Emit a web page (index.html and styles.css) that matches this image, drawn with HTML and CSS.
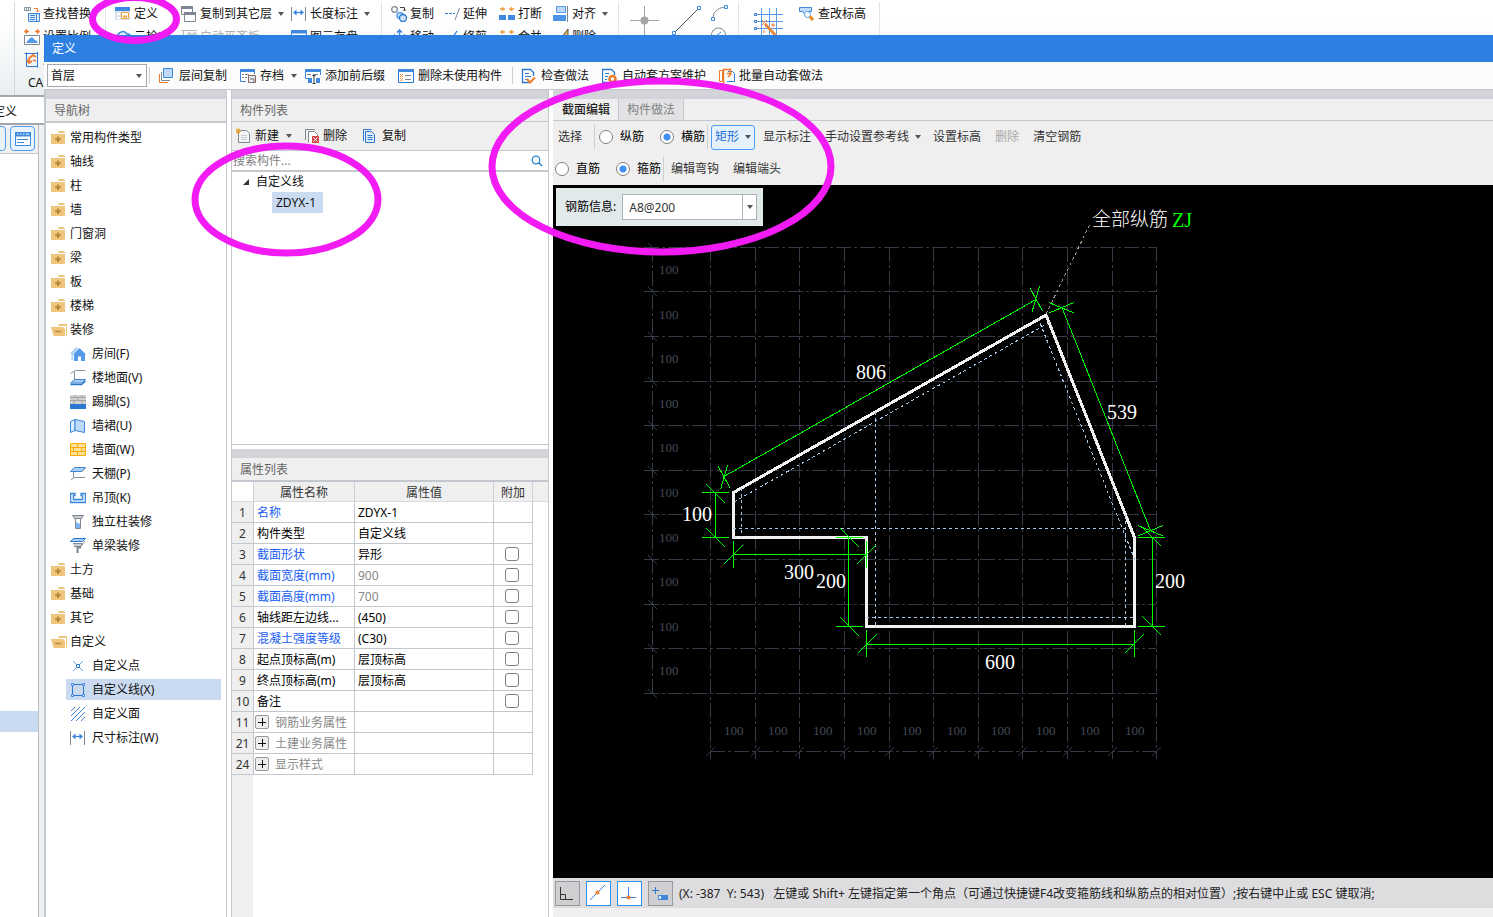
FILE: index.html
```html
<!DOCTYPE html>
<html lang="zh-CN">
<head>
<meta charset="utf-8">
<title>定义</title>
<link rel="stylesheet" href="styles.css">
</head>
<body>
<svg class="sprite" aria-hidden="true">
  <symbol id="i-folder" viewBox="0 0 16 16"><path d="M7 3V2.500L8 1h5l1 1.500V3z" fill="#efc984"/><path d="M0 4h14v10H0z" fill="#efc67d"/><path d="M7 6.500v5.500M4.200 9.200h5.600" stroke="#b98a33" stroke-width="2"/></symbol>
  <symbol id="i-open" viewBox="0 0 16 16"><path d="M7 4V3l1-1h8v12h-1V4z" fill="#efc67d"/><path d="M0 5h12l2 2v7H2.500z" fill="#efc67d"/><path d="M4 9.500h6" stroke="#b98a33" stroke-width="1.500"/></symbol>
  <symbol id="i-house" viewBox="0 0 16 16"><path d="M0 7.500L6.500 1 8 2.500 3 8v6H1.500V8z" fill="#a9cdf5"/><path d="M9.500 2L16 8.500h-1V15h-4v-4.500H8V15H4V8.500H3z" fill="#559bea"/></symbol>
  <symbol id="i-floor" viewBox="0 0 16 16"><path d="M15.500.5H5.500L.5 3.500" fill="none" stroke="#8795a3"/><path d="M4.500 1v9" stroke="#8795a3"/><path d="M5 9.500h10.500l-4 3.500H.5z" fill="#a9cdf5" stroke="#3d86d8"/><path d="M.5 14.500h11L15.500 11" stroke="#2b76cf" fill="none" stroke-width="1.500"/></symbol>
  <symbol id="i-skirt" viewBox="0 0 16 16"><path d="M0 1h16v9H0z" fill="#d2d2d2"/><path d="M0 3.500h16M0 6.500h16M5 1v2.500M12 1v2.500M8 3.500v3M4 6.500V10M12 6.500V10" stroke="#a4a4a4"/><path d="M0 10h16v5H0z" fill="#2a76d3"/></symbol>
  <symbol id="i-dado" viewBox="0 0 16 16"><path d="M.5 3.500L5 1.500v11L.5 14.500z" fill="#dcecfc" stroke="#3d86d8"/><path d="M5 1.500l9.500 2v11l-9.500-2z" fill="#bedafa" stroke="#3d86d8"/></symbol>
  <symbol id="i-brick" viewBox="0 0 16 16"><path d="M.5 1.500h15v12H.5zM.5 5.500h15M.5 9.500h15M7.500 1.500v4M3.500 5.500v4M11.500 5.500v4M7.500 9.500v4" fill="#ffe29a" stroke="#fdaa00"/></symbol>
  <symbol id="i-ceil" viewBox="0 0 16 16"><path d="M4.500 1.500h11l-4 4H.5z" fill="#a9cdf5" stroke="#3d86d8"/><path d="M3.500 6v6M1 14l3-2.500h11M11.500 6l4-4" fill="none" stroke="#8795a3"/></symbol>
  <symbol id="i-hang" viewBox="0 0 16 16"><path d="M.5 3.500H5v2H3.500v4h9v-4H11v-2h4.500v9H.5z" fill="#dcecfc" stroke="#3d86d8" stroke-width="1.300"/></symbol>
  <symbol id="i-col" viewBox="0 0 16 16"><path d="M2.500 1.500h11l-2 3h-7z" fill="#c9ced3" stroke="#7d8893"/><path d="M5.500 5v9.500h5V5" fill="#fff" stroke="#7d8893"/><path d="M6 8l4 2v4H6z" fill="#7db3f1"/></symbol>
  <symbol id="i-beam" viewBox="0 0 16 16"><path d="M3.500.5h12l-3 3H.5z" fill="#a9cdf5" stroke="#2b76cf"/><path d="M3 5.500h9l-1 3H4M12 7l3-4" fill="#c9ced3" stroke="#7d8893"/><path d="M11 9.500H7.500V15" fill="none" stroke="#7d8893" stroke-width="2"/></symbol>
  <symbol id="i-point" viewBox="0 0 16 16"><path d="M3 3l10 10M13 3L3 13" stroke="#6fa6e6"/><path d="M6.500 6.500h3v3h-3z" fill="#fff" stroke="#2b76cf"/></symbol>
  <symbol id="i-line" viewBox="0 0 16 16"><path d="M2.500 2.500h11v11h-11z" fill="none" stroke="#2b76cf"/><path d="M1.500 1.500h2v2h-2zM12.500 1.500h2v2h-2zM1.500 12.500h2v2h-2zM12.500 12.500h2v2h-2z" fill="#fff" stroke="#3f8ae0"/></symbol>
  <symbol id="i-hatch" viewBox="0 0 16 16"><path d="M1 5l4-4M1 10l9-9M1 15L15 1M6 15l9-9M11 15l4-4" stroke="#3f86dc"/></symbol>
  <symbol id="i-dim" viewBox="0 0 16 16"><path d="M.5 1v14M14.500 1v14" stroke="#7d8893"/><path d="M3 6.500h9" stroke="#3f86dc" stroke-width="1.300"/><path d="M2 6.500L5.500 3.500v6zM13 6.500L9.500 3.500v6z" fill="#3f86dc"/></symbol>
  <symbol id="i-find" viewBox="0 0 16 16"><path d="M.5 1.500h6v3h-6zM2.500 1.500v3M4.500 1.500v3" fill="none" stroke="#8795a3"/><path d="M10 2.500h3.500V6M12 4.500L13.500 6 15 4.500" fill="none" stroke="#ee7a2c"/><path d="M4.500 7.500h11v8h-11z" fill="#dcecfc" stroke="#3d86d8"/><path d="M4.500 7.500h11M6 9.500h5M6 11.500h5M6 13.500h5M12.500 8v7" stroke="#3d86d8"/></symbol>
  <symbol id="i-scale" viewBox="0 0 16 16"><path d="M1 2.500h4M3 .5L1 2.500l2 2M11 2.500h4M13 .5l2 2-2 2" fill="none" stroke="#ee7a2c" stroke-width="1.500"/><path d="M.5 6.500h15v9H.5z" fill="#fff" stroke="#7d8893"/><path d="M2 14l3-4 3-2 3 3 2 1 1 2z" fill="#559bea"/></symbol>
  <symbol id="i-restore" viewBox="0 0 16 16"><path d="M.5 1.500h13v13H2.500V.5M13.500 0v15.500" fill="none" stroke="#2b76cf"/><path d="M5 11V6.500L9 3l3 2M3 8l2 3 3-2M9 8l3 1" fill="none" stroke="#ee7a2c" stroke-width="1.800"/></symbol>
  <symbol id="i-define" viewBox="0 0 16 16"><path d="M0 1h15v13H0z" fill="#dbe4ee"/><path d="M0 1h15v4H0z" fill="#3f8ae0"/><path d="M2 7h3v2H2zM2 11h3v2H2z" fill="#fff"/><path d="M6.500 6.500h7v6h-7z" fill="#fff" stroke="#f2a13d"/><path d="M8 9.500h4v2H8z" fill="#f2a13d"/></symbol>
  <symbol id="i-cloud" viewBox="0 0 16 16"><path d="M3 12a3 3 0 010-6 5 5 0 019-1 4 4 0 011 8z" fill="#dcecfc" stroke="#3d86d8" stroke-width="1.500"/></symbol>
  <symbol id="i-copylayer" viewBox="0 0 16 16"><path d="M.5.500h11v8H.5z" fill="#fff" stroke="#7d8893"/><path d="M0 0h12v3H0z" fill="#7d8893"/><path d="M3.500 6.500h11v9h-11z" fill="#fff" stroke="#7d8893"/><path d="M3 6h12v3H3z" fill="#7d8893"/></symbol>
  <symbol id="i-align" viewBox="0 0 16 16"><path d="M3.500.5h9v6h-9z" fill="#bcd8f8" stroke="#559bea"/><path d="M0 9h13v6H0z" fill="#4d94e6"/><path d="M14.500 0v16" stroke="#7d8893"/></symbol>
  <symbol id="i-flat" viewBox="0 0 16 16"><path d="M0 1.500h16M2.500 2v13M7 4h3v11H7zM12 4h3v11h-3z" fill="#d8d8d8" stroke="#b9b9b9"/></symbol>
  <symbol id="i-window" viewBox="0 0 16 16"><path d="M.5 1.500h15v13H.5z" fill="#fff" stroke="#3d86d8"/><path d="M0 1h16v3.500H0z" fill="#3f8ae0"/><path d="M2 7.500h6M2 10.500h6" stroke="#3d86d8"/></symbol>
  <symbol id="i-copy" viewBox="0 0 16 16"><circle cx="3.500" cy="3.500" r="2.800" fill="#fff" stroke="#7d8893" stroke-width="1.300"/><path d="M9 1.500h4.500V5M12 3.500L13.500 5 15 3.500" fill="none" stroke="#444"/><circle cx="9" cy="9.500" r="3" fill="#cfe3fa" stroke="#559bea" stroke-width="1.500"/><circle cx="12" cy="12" r="3.500" fill="#cfe3fa" stroke="#2b76cf" stroke-width="1.300"/></symbol>
  <symbol id="i-move" viewBox="0 0 16 16"><path d="M8.500 1v14M1.500 8h14M6 3.500L8.500 1 11 3.500M4 5.500L1.500 8 4 10.500M13 5.500L15.500 8 13 10.500" fill="none" stroke="#3d86d8" stroke-width="1.500"/></symbol>
  <symbol id="i-extend" viewBox="0 0 16 16"><path d="M1 7.500h3M5 7.500h3M9 7.500h2" stroke="#2b76cf"/><path d="M15.500 2L11 14" stroke="#7d8893"/></symbol>
  <symbol id="i-trim" viewBox="0 0 16 16"><path d="M13 2L5 14M1 14h3" stroke="#2b76cf" stroke-width="1.300"/></symbol>
  <symbol id="i-break" viewBox="0 0 16 16"><path d="M1 3h5M3.500 1v4M10 3h5M12.500 1v4" stroke="#ee9a3c" stroke-width="1.300"/><path d="M0 9h7v5H0zM9 9h7v5H9z" fill="#3f8ae0"/></symbol>
  <symbol id="i-brush" viewBox="0 0 16 16"><path d="M15 0v6l-6 8-4-1z" fill="#d9b167" stroke="#5d5033"/></symbol>
  <symbol id="i-level" viewBox="0 0 16 16"><path d="M.5 1.500h12v4h-3l-2 5-4-5h-3z" fill="#bedafa" stroke="#3d86d8"/><circle cx="8.500" cy="8.500" r="3" fill="#fff" stroke="#559bea"/><path d="M11 10.500l3 3.500" stroke="#ee8a1c" stroke-width="3"/></symbol>
  <symbol id="i-layers" viewBox="0 0 16 16"><path d="M.5 6v8.500H9" fill="none" stroke="#ee7a2c"/><path d="M2.500 4v8.500H11" fill="none" stroke="#7d8893"/><path d="M4.500.5h9v9h-9z" fill="#bedafa" stroke="#3d86d8"/></symbol>
  <symbol id="i-save" viewBox="0 0 16 16"><path d="M14.500 6V1.500H.5v12H6" fill="#fff" stroke="#3d86d8"/><path d="M0 1h15v3H0z" fill="#3f8ae0"/><path d="M2 6.500h2M5 6.500h4M2 9.500h2M5 9.500h2" stroke="#7d8893"/><path d="M8.500 7.500h7v7h-7zM10 11h4v4" fill="#dcecfc" stroke="#8a6a5a"/></symbol>
  <symbol id="i-prefix" viewBox="0 0 16 16"><path d="M15.500 7V1.500H.5v9H4" fill="#fff" stroke="#3d86d8"/><path d="M0 1h16v3H0z" fill="#3f8ae0"/><path d="M2 6.500h4M8 6.500h5" stroke="#7d8893"/><path d="M3 10h4v5H3zM11 10h4v5h-4z" fill="#3f8ae0"/><path d="M9 7v9M7.500 7.500h3M7.500 15.500h3" stroke="#333"/></symbol>
  <symbol id="i-unused" viewBox="0 0 16 16"><path d="M.5 1.500h15v13H.5z" fill="#fff" stroke="#2b76cf"/><path d="M0 1h16v3H0z" fill="#3f8ae0"/><path d="M2 6l3 3M5 6L2 9M2 10l3 3M5 10l-3 3" stroke="#ee9a3c"/><path d="M7 7.500h6M7 11.500h6" stroke="#7d8893"/></symbol>
  <symbol id="i-check" viewBox="0 0 16 16"><path d="M12.500 8V4.500l-3-3h-8v13H8" fill="#fff" stroke="#2b76cf" stroke-width="1.300"/><path d="M4 5.500h4M4 8.500h6M4 11.500h3" stroke="#2b76cf"/><path d="M6 11l3 3.500 5-5" fill="none" stroke="#ee7a2c" stroke-width="2"/></symbol>
  <symbol id="i-plan" viewBox="0 0 16 16"><path d="M12.500 7V4.500l-3-3h-9v13H6" fill="#fff" stroke="#2b76cf" stroke-width="1.300"/><path d="M3 5.500h4M3 8.500h3M3 11.500h2" stroke="#2b76cf"/><circle cx="10.500" cy="11" r="3" fill="#fff" stroke="#ee7a2c" stroke-width="2.600"/></symbol>
  <symbol id="i-batch" viewBox="0 0 16 16"><path d="M.5 2.500h3v11h-3z" fill="#fff" stroke="#ee7a2c"/><path d="M9 3.500h4.500l2 2v8H8" fill="#fff" stroke="#2b76cf"/><path d="M4.500 15.500V1.500h7V6M8 5.500h4M11 3l1 3-3 3" fill="none" stroke="#ee7a2c" stroke-width="1.500"/></symbol>
  <symbol id="i-new" viewBox="0 0 16 16"><path d="M2.500 2.500h8l3 3v9h-11z" fill="#f4f4f4" stroke="#7d8893"/><path d="M5 7.500h6M5 9.500h6M5 11.500h6" stroke="#c9ced3"/><path d="M0 1l4 4M4 1L0 5M2 0v6M0 3h5" stroke="#ee9a1c"/></symbol>
  <symbol id="i-delete" viewBox="0 0 16 16"><path d="M1.500 12V1.500h9" fill="none" stroke="#7d8893"/><path d="M4.500 14.500V3.500h6l3 3V9" fill="#fff" stroke="#7d8893"/><path d="M8 8h7v7H8z" fill="#d04848"/><path d="M9.500 9.500l4 4M13.500 9.500l-4 4" stroke="#fff"/></symbol>
  <symbol id="i-duplicate" viewBox="0 0 16 16"><path d="M.5 13V1.500h8" fill="none" stroke="#2b76cf"/><path d="M2.500 3.500h6l3 3v8h-9z" fill="#dcecfc" stroke="#2b76cf"/><path d="M4.500 7.500h5M4.500 9.500h5M4.500 11.500h5" stroke="#2b76cf"/></symbol>
  <symbol id="i-form" viewBox="0 0 16 16"><path d="M.5 1.500h15v13H.5z" fill="#fff" stroke="#3f8ae0"/><path d="M0 1h16v4.500H0z" fill="#3f8ae0"/><path d="M2 3h1.500M5 3h1.500M8 3h1.500M11 3h3" stroke="#fff"/><path d="M2 8.500h11M2 11.500h7" stroke="#3f8ae0"/></symbol>
</svg>

<div class="app">
  <div class="ribbon">
    <div class="rcol rcol-edge"></div>
    <div class="rcol rcol-cad">
      <button class="tool"><svg class="ico"><use href="#i-find"/></svg>查找替换</button>
      <button class="tool"><svg class="ico"><use href="#i-scale"/></svg>设置比例</button>
      <button class="tool"><svg class="ico"><use href="#i-restore"/></svg>还原</button>
      <span class="group-name">CAD操作</span>
    </div>
    <div class="rcol rcol-define">
      <button class="tool"><svg class="ico"><use href="#i-define"/></svg>定义</button>
      <button class="tool"><svg class="ico"><use href="#i-cloud"/></svg>云检查</button>
    </div>
    <div class="rcol rcol-layer">
      <button class="tool"><svg class="ico"><use href="#i-copylayer"/></svg>复制到其它层<i class="caret"></i></button>
      <button class="tool" disabled><svg class="ico"><use href="#i-flat"/></svg>自动平齐板</button>
    </div>
    <div class="rcol rcol-length">
      <button class="tool"><svg class="ico"><use href="#i-dim"/></svg>长度标注<i class="caret"></i></button>
      <button class="tool"><svg class="ico"><use href="#i-window"/></svg>图元存盘</button>
    </div>
    <div class="rcol rcol-copy">
      <button class="tool"><svg class="ico"><use href="#i-copy"/></svg>复制</button>
      <button class="tool"><svg class="ico"><use href="#i-move"/></svg>移动</button>
    </div>
    <div class="rcol rcol-extend">
      <button class="tool"><svg class="ico"><use href="#i-extend"/></svg>延伸</button>
      <button class="tool"><svg class="ico"><use href="#i-trim"/></svg>修剪</button>
    </div>
    <div class="rcol rcol-break">
      <button class="tool"><svg class="ico"><use href="#i-break"/></svg>打断</button>
      <button class="tool"><svg class="ico"><use href="#i-break"/></svg>合并</button>
    </div>
    <div class="rcol rcol-align">
      <button class="tool"><svg class="ico"><use href="#i-align"/></svg>对齐<i class="caret"></i></button>
      <button class="tool"><svg class="ico"><use href="#i-brush"/></svg>删除</button>
    </div>
    <div class="rcol rcol-draw">
      <svg width="119" height="46" viewBox="619 0 119 46"><path d="M630 20.500h29M644.500 6v29" stroke="#a5a5a5"/><circle cx="644.500" cy="20.500" r="4" fill="#a5a5a5"/><path d="M674 33L699 8" stroke="#444c55"/><path d="M672.500 31.500h3v3h-3zM697.500 6.500h3v3h-3zM711.500 17.500h3v3h-3zM724.500 5.500h3v3h-3z" fill="#fff" stroke="#3f8ae0"/><path d="M713 17q1-8 11-10" fill="none" stroke="#7d8893"/><circle cx="718.500" cy="35" r="7" fill="none" stroke="#7d8893"/><path d="M715 37l6-5" stroke="#3f8ae0"/></svg>
    </div>
    <div class="rcol rcol-grid">
      <svg width="51" height="46" viewBox="739 0 51 46"><path d="M757 14.500h26M757 21.500h26M757 28.500h26M761.500 8v30M769.500 8v30M776.500 8v30" stroke="#559bea"/><path d="M754.500 13.500h2v2h-2zM754.500 20.500h2v2h-2zM754.500 27.500h2v2h-2z" fill="#fff" stroke="#2b76cf"/><path d="M765 24l13 14" stroke="#e8883a" stroke-width="3"/><path d="M762 20l5 5M767 20l-5 5M773 23v4M771 25h4M764 30v3" stroke="#ee7a2c"/></svg>
    </div>
    <div class="rcol rcol-level">
      <button class="tool"><svg class="ico"><use href="#i-level"/></svg>查改标高</button>
    </div>
  </div>
  <div class="dock">
    <div class="dock-tab">定义</div>
    <div class="dock-panel">
      <div class="dock-tools">
        <button class="dock-btn" aria-label="列表"></button>
        <button class="dock-btn" aria-label="属性"><svg class="ico"><use href="#i-form"/></svg></button>
      </div>
      <div class="dock-row"></div>
    </div>
  </div>

  <section class="dialog">
    <h1 class="titlebar">定义</h1>
    <div class="toolbar">
      <span class="combo combo-floor"><select aria-label="楼层"><option>首层</option></select></span>
      <i class="sep"></i>
      <button class="tool"><svg class="ico"><use href="#i-layers"/></svg>层间复制</button>
      <button class="tool"><svg class="ico"><use href="#i-save"/></svg>存档<i class="caret"></i></button>
      <button class="tool"><svg class="ico"><use href="#i-prefix"/></svg>添加前后缀</button>
      <button class="tool"><svg class="ico"><use href="#i-unused"/></svg>删除未使用构件</button>
      <i class="sep"></i>
      <button class="tool"><svg class="ico"><use href="#i-check"/></svg>检查做法</button>
      <button class="tool"><svg class="ico"><use href="#i-plan"/></svg>自动套方案维护</button>
      <button class="tool"><svg class="ico"><use href="#i-batch"/></svg>批量自动套做法</button>
    </div>
    <div class="panes">
      <nav class="pane nav">
        <h2 class="pane-title">导航树</h2>
        <ul class="tree">
          <li><svg class="ico"><use href="#i-folder"/></svg>常用构件类型</li>
          <li><svg class="ico"><use href="#i-folder"/></svg>轴线</li>
          <li><svg class="ico"><use href="#i-folder"/></svg>柱</li>
          <li><svg class="ico"><use href="#i-folder"/></svg>墙</li>
          <li><svg class="ico"><use href="#i-folder"/></svg>门窗洞</li>
          <li><svg class="ico"><use href="#i-folder"/></svg>梁</li>
          <li><svg class="ico"><use href="#i-folder"/></svg>板</li>
          <li><svg class="ico"><use href="#i-folder"/></svg>楼梯</li>
          <li><svg class="ico"><use href="#i-open"/></svg>装修</li>
          <li class="leaf"><svg class="ico"><use href="#i-house"/></svg>房间(F)</li>
          <li class="leaf"><svg class="ico"><use href="#i-floor"/></svg>楼地面(V)</li>
          <li class="leaf"><svg class="ico"><use href="#i-skirt"/></svg>踢脚(S)</li>
          <li class="leaf"><svg class="ico"><use href="#i-dado"/></svg>墙裙(U)</li>
          <li class="leaf"><svg class="ico"><use href="#i-brick"/></svg>墙面(W)</li>
          <li class="leaf"><svg class="ico"><use href="#i-ceil"/></svg>天棚(P)</li>
          <li class="leaf"><svg class="ico"><use href="#i-hang"/></svg>吊顶(K)</li>
          <li class="leaf"><svg class="ico"><use href="#i-col"/></svg>独立柱装修</li>
          <li class="leaf"><svg class="ico"><use href="#i-beam"/></svg>单梁装修</li>
          <li><svg class="ico"><use href="#i-folder"/></svg>土方</li>
          <li><svg class="ico"><use href="#i-folder"/></svg>基础</li>
          <li><svg class="ico"><use href="#i-folder"/></svg>其它</li>
          <li><svg class="ico"><use href="#i-open"/></svg>自定义</li>
          <li class="leaf"><svg class="ico"><use href="#i-point"/></svg>自定义点</li>
          <li class="leaf selected"><svg class="ico"><use href="#i-line"/></svg>自定义线(X)</li>
          <li class="leaf"><svg class="ico"><use href="#i-hatch"/></svg>自定义面</li>
          <li class="leaf"><svg class="ico"><use href="#i-dim"/></svg>尺寸标注(W)</li>
        </ul>
      </nav>

      <div class="middle">
        <section class="pane components">
          <h2 class="pane-title">构件列表</h2>
          <div class="list-tools">
            <button class="tool"><svg class="ico"><use href="#i-new"/></svg>新建<i class="caret"></i></button>
            <button class="tool"><svg class="ico"><use href="#i-delete"/></svg>删除</button>
            <button class="tool"><svg class="ico"><use href="#i-duplicate"/></svg>复制</button>
          </div>
          <div class="search">
            <input type="text" aria-label="搜索构件" placeholder="搜索构件...">
            <svg width="12" height="12" viewBox="0 0 12 12"><circle cx="5" cy="5" r="3.800" fill="none" stroke="#2585c7" stroke-width="1.300"/><path d="M7.500 7.500L11 11" stroke="#2585c7" stroke-width="1.600"/></svg>
          </div>
          <div class="component-tree">
            <div class="branch"><svg width="8" height="8" viewBox="0 0 8 8"><path d="M7 1v6H1z" fill="#333"/></svg>自定义线</div>
            <div class="item">ZDYX-1</div>
          </div>
        </section>

        <section class="pane properties">
          <h2 class="pane-title">属性列表</h2>
          <div class="grid-wrap">
            <table>
              <thead><tr><th class="c-num"></th><th class="c-name">属性名称</th><th class="c-val">属性值</th><th class="c-add">附加</th><th class="c-rest"></th></tr></thead>
              <tbody>
                <tr><th>1</th><td class="blue">名称</td><td>ZDYX-1</td><td></td></tr>
                <tr><th>2</th><td>构件类型</td><td>自定义线</td><td></td></tr>
                <tr><th>3</th><td class="blue">截面形状</td><td>异形</td><td><input type="checkbox" aria-label="附加 截面形状"></td></tr>
                <tr><th>4</th><td class="blue">截面宽度(mm)</td><td class="dim">900</td><td><input type="checkbox" aria-label="附加 截面宽度"></td></tr>
                <tr><th>5</th><td class="blue">截面高度(mm)</td><td class="dim">700</td><td><input type="checkbox" aria-label="附加 截面高度"></td></tr>
                <tr><th>6</th><td>轴线距左边线...</td><td>(450)</td><td><input type="checkbox" aria-label="附加 轴线距左边线"></td></tr>
                <tr><th>7</th><td class="blue">混凝土强度等级</td><td>(C30)</td><td><input type="checkbox" aria-label="附加 混凝土强度等级"></td></tr>
                <tr><th>8</th><td>起点顶标高(m)</td><td>层顶标高</td><td><input type="checkbox" aria-label="附加 起点顶标高"></td></tr>
                <tr><th>9</th><td>终点顶标高(m)</td><td>层顶标高</td><td><input type="checkbox" aria-label="附加 终点顶标高"></td></tr>
                <tr><th>10</th><td>备注</td><td></td><td><input type="checkbox" aria-label="附加 备注"></td></tr>
                <tr><th>11</th><td class="dim"><button class="expand" aria-label="展开"></button>钢筋业务属性</td><td></td><td></td></tr>
                <tr><th>21</th><td class="dim"><button class="expand" aria-label="展开"></button>土建业务属性</td><td></td><td></td></tr>
                <tr><th>24</th><td class="dim"><button class="expand" aria-label="展开"></button>显示样式</td><td></td><td></td></tr>
              </tbody>
            </table>
          </div>
        </section>
      </div>

      <section class="pane editor">
        <div class="tabs">
          <button class="tab active">截面编辑</button>
          <button class="tab">构件做法</button>
        </div>
        <div class="edit-tools">
          <div class="edit-row">
            <button class="flat first">选择</button>
            <i class="sep"></i>
            <label class="radio"><input type="radio" name="bar">纵筋</label>
            <label class="radio"><input type="radio" name="bar" checked>横筋</label>
            <i class="sep tight"></i>
            <button class="shape">矩形<i class="caret"></i></button>
            <button class="flat">显示标注</button>
            <button class="flat">手动设置参考线<i class="caret"></i></button>
            <button class="flat">设置标高</button>
            <button class="flat" disabled>删除</button>
            <button class="flat">清空钢筋</button>
          </div>
          <div class="edit-row">
            <label class="radio lead"><input type="radio" name="kind">直筋</label>
            <label class="radio"><input type="radio" name="kind" checked>箍筋</label>
            <i class="sep tight"></i>
            <button class="flat">编辑弯钩</button>
            <button class="flat">编辑端头</button>
          </div>
        </div>
        <div class="canvas">
          <svg class="drawing" width="940" height="693" viewBox="553 185 940 693">
            <g class="axis" fill="none">
              <path class="dashdot" d="M644 247.500H1156M644 291.500H1156M644 336.500H1156M644 381.500H1156M644 425.500H1156M644 470.500H1156M644 514.500H1156M644 559.500H1156M644 604.500H1156M644 648.500H1156M644 693.500H1156M652.500 247V693"/>
              <path class="dashdot" d="M710.500 247V759M755.500 247V759M799.500 247V759M844.500 247V759M889.500 247V759M933.500 247V759M978.500 247V759M1022.500 247V759M1067.500 247V759M1112.500 247V759M1156.500 247V759M710 751.500H1156"/>
              <path d="M648 243l9 9M648 287l9 9M648 332l9 9M648 377l9 9M648 421l9 9M648 466l9 9M648 510l9 9M648 555l9 9M648 600l9 9M648 644l9 9M648 689l9 9"/>
              <path d="M706 756l9-9M751 756l9-9M795 756l9-9M840 756l9-9M885 756l9-9M929 756l9-9M974 756l9-9M1018 756l9-9M1063 756l9-9M1108 756l9-9M1152 756l9-9"/>
            </g>
            <g class="axis-label">
              <text x="659" y="274">100</text><text x="659" y="319">100</text><text x="659" y="363">100</text><text x="659" y="408">100</text><text x="659" y="452">100</text><text x="659" y="497">100</text><text x="659" y="542">100</text><text x="659" y="586">100</text><text x="659" y="631">100</text><text x="659" y="675">100</text>
              <text x="724" y="735">100</text><text x="768" y="735">100</text><text x="813" y="735">100</text><text x="857" y="735">100</text><text x="902" y="735">100</text><text x="947" y="735">100</text><text x="991" y="735">100</text><text x="1036" y="735">100</text><text x="1080" y="735">100</text><text x="1125" y="735">100</text>
            </g>
            <path class="leader" d="M1046 314L1091 222"/>
            <path class="outline" d="M733.500 492.500L1046 315L1134.500 537.500V626.500H866.500V537.500H733.500Z"/>
            <path class="stirrup" d="M741.500 488V537M733 528.500H1126M875.500 412V626M1125.500 515V627M866 617.500H1134M734 502L1050 322M1038 318L1135 560"/>
            <path class="dimension" d="M724 476.500L1036 299.500M1030 288L1042.500 311M1039.500 286L1032 312M718 466L730.500 488.500M727.500 465.500L720.500 489.500M1062 307.500L1150.500 530.500M1049 302.500L1074 313M1049 313L1074 302.500M1138 525.500L1163 536M1138 536L1163 525.500"/>
            <path class="dimension" d="M715.500 492V538M702 492.500H729M702 537.500H729M706 484l19 19M706 528l19 19M733 554.500H867M733.500 541V568M866.500 541V568M724 564l19-19M857 564l19-19M848.500 537V627M836 537.500H863M836 626.500H863M840 528l19 19M840 617l19 19M866 644.500H1135M866.500 630V657M1134.500 630V657M858 653l19-19M1125 653l19-19M1152.500 537V627M1138 537.500H1165M1138 626.500H1165M1142 527l19 19M1142 616l19 19"/>
            <g class="value">
              <text x="856" y="379">806</text><text x="1107" y="419">539</text><text x="682" y="521">100</text><text x="784" y="579">300</text><text x="816" y="588">200</text><text x="1155" y="588">200</text><text x="985" y="669">600</text>
              <text class="note" x="1092" y="226">全部纵筋</text><text class="mark" x="1172" y="227">ZJ</text>
            </g>
          </svg>
          <div class="info">
            <label for="rebar">钢筋信息:</label>
            <span class="combo combo-rebar"><input id="rebar" type="text" value="A8@200"><button aria-label="展开列表"></button></span>
          </div>
        </div>
        <div class="status">
          <button class="snap" aria-label="正交"><svg width="23" height="23" viewBox="0 0 23 23"><path d="M4.500 5v12.500H17M5 12.500h4.500V17" fill="none" stroke="#333"/></svg></button>
          <button class="snap on" aria-label="中点"><svg width="23" height="23" viewBox="0 0 23 23"><path d="M3 18L18 3" stroke="#3d86d8"/><path d="M9.500 9.500h2v2h-2z" fill="#fff" stroke="#ee7a2c" stroke-width="1.500"/></svg></button>
          <button class="snap on" aria-label="垂点"><svg width="23" height="23" viewBox="0 0 23 23"><path d="M10.500 5v10M3 15.500h15" stroke="#3d86d8"/><path d="M9.500 14.500h2v2h-2z" fill="#fff" stroke="#ee7a2c" stroke-width="1.500"/></svg></button>
          <button class="snap" aria-label="动态输入"><svg width="23" height="23" viewBox="0 0 23 23"><path d="M3 8.500h7M6.500 5v7" stroke="#2b76cf"/><path d="M9 13h10v5H9z" fill="#3f86dc"/><path d="M10 14h2v3h-2z" fill="#dcecfc"/></svg></button>
          <span>(X: -387&nbsp; Y: 543)&nbsp;&nbsp; 左键或 Shift+ 左键指定第一个角点（可通过快捷键F4改变箍筋线和纵筋点的相对位置）;按右键中止或 ESC 键取消;</span>
        </div>
      </section>
    </div>
  </section>

  <svg class="marks" width="900" height="270" aria-hidden="true">
    <ellipse cx="134.500" cy="19" rx="42" ry="21.500"/>
    <ellipse cx="286.500" cy="199.500" rx="91.500" ry="53.500"/>
    <ellipse cx="661.500" cy="166.500" rx="169.500" ry="85.500"/>
  </svg>
</div>
</body>
</html>
```
FILE: styles.css
```css
* { box-sizing: border-box; }
body {
  margin: 0;
  font: 12px/16px "Noto Sans", "Noto Sans CJK SC", sans-serif;
  color: #111;
  background: #fff;
}
button, input, select { font: inherit; color: inherit; margin: 0; }
button { border: 0; padding: 0; background: none; white-space: nowrap; }
h1, h2, ul { margin: 0; padding: 0; font-size: 12px; font-weight: 400; list-style: none; }
.sprite { position: absolute; width: 0; height: 0; }
.ico { width: 16px; height: 16px; flex: none; }
.app { position: relative; min-height: 100vh; overflow: hidden; display: flex; flex-direction: column; }
.tool { display: flex; align-items: center; gap: 3px; height: 23px; }
.tool:disabled { color: #b0b0b0; }
.caret {
  width: 0; height: 0; flex: none;
  border: 3px solid transparent; border-top: 4px solid #555; border-bottom: 0;
  margin-left: 3px;
}

/* ribbon */
.ribbon { display: flex; height: 97px; padding-top: 2px; border-bottom: 2px solid #a3a6aa; background: linear-gradient(#fff 20px, #e9eef0); overflow: hidden; }
.rcol { flex: none; border-right: 1px solid transparent; }
.rcol-edge { width: 15px; border-right-color: #d5d8db; }
.rcol-cad { width: 91px; padding-left: 9px; border-right-color: #e2e4e6; }
.rcol-define { width: 70px; padding-left: 9px; }
.rcol-layer { width: 110px; padding-left: 5px; }
.rcol-length { width: 96px; padding-left: 5px; border-right-color: #e2e4e6; }
.rcol-copy { width: 62px; padding-left: 9px; }
.rcol-extend { width: 49px; }
.rcol-break { width: 60px; padding-left: 6px; }
.rcol-align { width: 66px; border-right-color: #e2e4e6; }
.rcol-draw { width: 120px; border-right-color: #e2e4e6; }
.rcol-grid { width: 51px; }
.rcol-level { width: 90px; padding-left: 9px; border-right-color: #e2e4e6; }
.rcol-draw svg, .rcol-grid svg { display: block; margin-top: -2px; }
.group-name { display: block; padding: 4px; white-space: nowrap; }

/* left dock */
.dock { flex: 1; width: 44px; display: flex; flex-direction: column; background: #f0f0f0; }
.dock-tab { height: 28px; padding: 7px 27px 0 0; background: #fff; border-bottom: 2px solid #a3a6aa; overflow: hidden; display: flex; justify-content: flex-end; white-space: nowrap; }
.dock-panel { flex: 1; width: 39px; border-right: 1px solid #b9bdc4; background: #fff; }
.dock-tools { display: flex; justify-content: flex-end; gap: 4px; padding: 1px 3px 2px; background: #f0f0f0; border-bottom: 1px solid #c3c7cd; overflow: hidden; }
.dock-btn { flex: none; width: 25px; height: 25px; border: 1px solid #4f9df0; border-radius: 4px; background: #e8f3fe; display: grid; place-items: center; }
.dock-row { height: 21px; margin-top: 557px; background: #cadaf0; }

/* dialog */
.dialog { position: absolute; inset: 35px 0 0 44px; display: flex; flex-direction: column; background: #fff; }
.titlebar { height: 27px; padding: 6px 8px 0; color: #fff; background: #2d7fe2; }
.toolbar { display: flex; align-items: center; gap: 13px; height: 28px; padding-left: 3px; border-bottom: 1px solid #c3c7cd; background: #fcfcfc; }
.toolbar .tool { gap: 4px; }
.toolbar .caret { margin-right: -5px; }
.sep { flex: none; width: 1px; height: 17px; background: #cfcfd2; }
.toolbar .sep { margin: 0 -5px 0 -3px; }
.toolbar .combo + .sep { margin-left: -11px; margin-right: -4px; }
.combo { position: relative; display: inline-flex; }
.combo select, .combo input { appearance: none; width: 100%; border: 0; outline: 0; padding: 0 3px; background: #fff; }
.combo-floor { width: 100px; height: 23px; border: 1px solid #a5a8ad; }
.combo-floor::after, .combo-rebar button::after {
  content: ""; border: 3px solid transparent; border-top: 4px solid #555; border-bottom: 0;
}
.combo-floor::after { position: absolute; right: 4px; top: 9px; }
.panes { flex: 1; min-height: 0; display: flex; gap: 4px; border-left: 2px solid #c0c8d2; }
.pane { display: flex; flex-direction: column; border-top: 9px solid #d3d4da; }
.pane-title { flex: none; height: 24px; padding: 4px 8px 0; color: #666; background: #efefef; border-bottom: 2px solid #c3c7ce; }
.nav { width: 181px; border-right: 1px solid #c3c7ce; flex: none; }
.tree { padding: 4px 5px 0; }
.tree li { display: flex; align-items: center; gap: 3px; height: 21px; margin-bottom: 3px; }
.tree .leaf { gap: 6px; margin-left: 15px; padding-left: 4px; }
.tree .selected { background: #cadaf0; }

.middle { flex: none; width: 318px; display: flex; flex-direction: column; gap: 4px; border: solid #c3c7ce; border-width: 0 1px; }
.components { flex: none; height: 355px; border-bottom: 1px solid #c3c7ce; }
.components .pane-title { border-bottom-width: 1px; height: 23px; }
.list-tools { display: flex; gap: 16px; height: 29px; padding: 2px 4px; background: #efefef; border-bottom: 1px solid #c3c7ce; }
.list-tools .caret { margin-left: 4px; margin-right: -4px; }
.search { display: flex; align-items: center; height: 21px; padding-right: 5px; border-bottom: 2px solid #c3c7ce; }
.search input { flex: 1; min-width: 0; border: 0; outline: 0; padding: 0 1px; background: none; }
.search input::placeholder { color: #808080; opacity: 1; }
.component-tree { padding: 0 10px; }
.branch { display: flex; align-items: center; gap: 6px; height: 20px; }
.item { display: inline-block; height: 21px; padding: 3px 7px 0 4px; margin-left: 30px; background: #cadaf0; }

.properties { flex: 1; min-height: 0; }
.grid-wrap { flex: 1; background: linear-gradient(90deg, #efefef 21px, #fff 21px); }
table { width: 100%; border-collapse: separate; border-spacing: 0; table-layout: fixed; }
thead th { height: 20px; background: #efefef; border-bottom: 1px solid #d9dbdf; border-right: 1px solid #cfd2d7; }
thead .c-num { width: 22px; background: #fff; }
.c-name { width: 101px; }
.c-val { width: 139px; }
.c-add { width: 39px; }
thead .c-rest { border-right: 0; }
th, td { padding: 2px 3px 0; height: 21px; line-height: 16px; font-weight: 400; white-space: nowrap; color: #333; }
tbody th { padding: 2px 0 0; text-align: center; background: #efefef; }
tbody th, td { border: solid #c3c7ce; border-width: 0 1px 1px 0; }
td { color: #000; background: #fff; }
td.blue { color: #1a5df0; }
td.dim { color: #888; }
td:nth-child(4) { text-align: center; padding: 0 2px 0 0; }
input[type=checkbox] { appearance: none; display: block; width: 14px; height: 14px; margin: 0 auto; border: 1px solid #808080; border-radius: 3px; background: #fff; }
.expand { display: inline-block; width: 14px; height: 14px; margin: -3px 6px 0 -2px; vertical-align: middle; border: 1px solid #999; border-radius: 2px; background: linear-gradient(#111, #111) center / 8px 1px no-repeat, linear-gradient(#111, #111) center / 1px 8px no-repeat, #eee; }

/* section editor */
.editor { flex: 1; min-width: 0; background: #efefef; }
.tabs { display: flex; height: 22px; padding-left: 1px; border-bottom: 1px solid #c3c7ce; }
.tab { padding: 0 8px; color: #808080; background: #e2e2e4; border-right: 1px solid #c3c7ce; }
.tab.active { color: #222; background: #efefef; font-weight: 500; }
.edit-tools { display: flex; flex-direction: column; height: 64px; }
.edit-row { display: flex; align-items: center; height: 32px; }
.flat { display: flex; align-items: center; gap: 3px; padding: 0 7px; color: #333; }
.flat .caret { margin-right: -2px; }
.flat.first { padding: 0 12px 0 5px; }
.flat:disabled { color: #aaa; }
.edit-row .sep { height: 24px; }
.radio { display: flex; align-items: center; gap: 7px; margin-left: 16px; color: #000; }
.edit-row .sep + .radio { margin-left: 4px; }
.edit-row .lead { margin-left: 2px; }
input[type=radio] { appearance: none; width: 14px; height: 14px; border: 1px solid #808080; border-radius: 50%; background: #fff; }
input[type=radio]:checked { background: radial-gradient(circle, #3f8fef 3px, #fff 4px); }
.sep.tight { margin-left: 2px; }
.shape { display: flex; align-items: center; gap: 3px; height: 25px; margin: 0 1px 0 3px; padding: 0 3px; color: #1b6fd6; background: #e5f1fd; border: 1px solid #4f9df0; border-radius: 3px; }
.canvas { flex: 1; min-height: 0; position: relative; overflow: hidden; background: #000; }
.drawing { display: block; shape-rendering: crispEdges; }
.axis path { stroke: #343b47; }
.dashdot { stroke-dasharray: 15 3 3 3; }
.axis-label { font: 13px "Liberation Serif", serif; fill: #444b58; }
.leader { stroke: #999; stroke-dasharray: 3 3; }
.outline { fill: none; stroke: #f2f2f2; stroke-width: 3; }
.stirrup { fill: none; stroke: #a9c8e8; stroke-dasharray: 3 3; }
.dimension { fill: none; stroke: #0f0; }
.value { font: 20px "Liberation Serif", serif; fill: #fff; }
.note { font: 300 19px "Noto Sans CJK SC", sans-serif; }
.mark { fill: #0f0; }
.info { position: absolute; left: 3px; top: 3px; display: flex; align-items: center; gap: 6px; width: 207px; height: 38px; padding-left: 9px; background: #e2e9eb; color: #000; }
.combo-rebar { flex: none; width: 135px; height: 26px; border: 1px solid #adb2b5; background: #fff; color: #333; }
.combo-rebar input { flex: 1; min-width: 0; padding: 2px 6px 0; }
.combo-rebar button { width: 14px; display: grid; place-items: center; border-left: 1px solid #adb2b5; background: #fff; }
.status { display: flex; align-items: center; gap: 6px; height: 39px; padding: 0 2px; background: #dddde0; border-bottom: 9px solid #f0f0f0; color: #222; white-space: nowrap; }
.snap { width: 25px; height: 25px; flex: none; border: 1px solid #98999c; background: #cfcfd2; }
.snap.on { border-color: #2d93f5; background: #fff; }
.snap svg { display: block; }
.status span { padding-top: 2px; }

.marks { position: absolute; left: 0; top: 0; pointer-events: none; fill: none; stroke: #f31bf3; stroke-width: 7; }
```
